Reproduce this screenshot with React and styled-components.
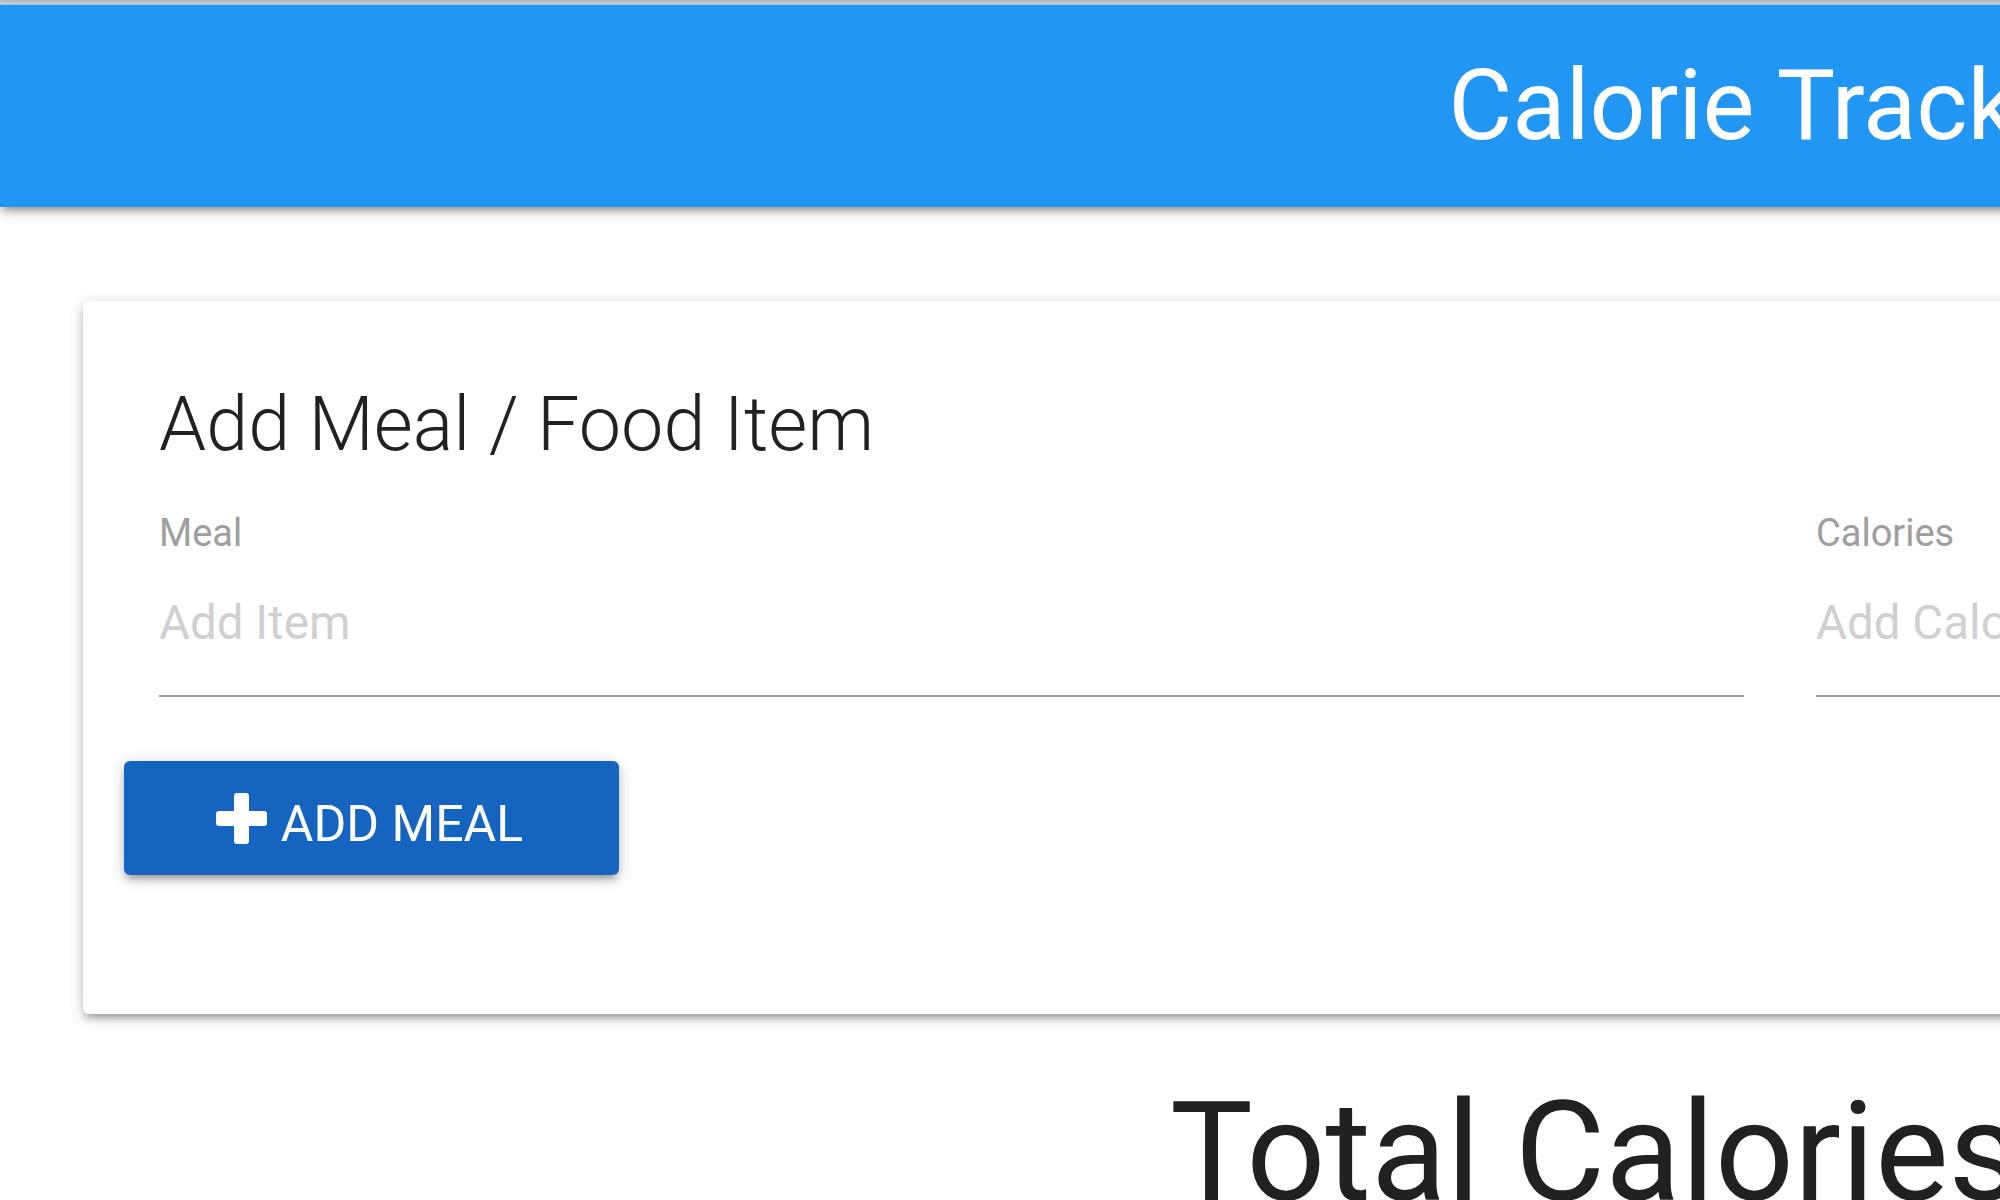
import React from "react";
import styled, { createGlobalStyle } from "styled-components";

const GlobalStyle = createGlobalStyle`
  html, body {
    margin: 0;
    padding: 0;
    background: #ffffff;
    overflow: hidden;
  }
  body {
    font-family: Roboto, "Liberation Sans", sans-serif;
    color: rgba(0, 0, 0, 0.87);
  }
  * { box-sizing: border-box; }
`;

const Page = styled.div`
  width: 3550px;
  display: flex;
  flex-direction: column;
  & > * { flex-shrink: 0; }
`;

const TopEdge = styled.div`
  height: 5px;
  background: linear-gradient(to bottom, #b9b9b9 0%, #d4d4d4 60%, #9fd0fb 100%);
`;

const NavBar = styled.nav`
  height: 202px;
  background: #2196f3;
  display: flex;
  align-items: center;
  justify-content: center;
  box-shadow: 0 6px 6px 0 rgba(0, 0, 0, 0.14), 0 9px 3px -6px rgba(0, 0, 0, 0.12),
    0 3px 15px 0 rgba(0, 0, 0, 0.2);
  position: relative;
  z-index: 1;
`;

const Brand = styled.a`
  color: #ffffff;
  font-family: Roboto, "Liberation Sans", sans-serif;
  font-size: 98px;
  font-weight: 400;
  line-height: 198px;
  text-decoration: none;
  white-space: nowrap;
`;

const Main = styled.main`
  padding: 94px 83px 0;
  display: flex;
  flex-direction: column;
  & > * { flex-shrink: 0; }
`;

const Card = styled.section`
  background: #ffffff;
  border-radius: 6px;
  height: 713px;
  box-shadow: 0 6px 6px 0 rgba(0, 0, 0, 0.14), 0 9px 3px -6px rgba(0, 0, 0, 0.12),
    0 3px 15px 0 rgba(0, 0, 0, 0.2);
  display: flex;
  flex-direction: column;
`;

const CardContent = styled.div`
  padding: 76px 76px 0;
  display: flex;
  flex-direction: column;
`;

const CardTitle = styled.h2`
  margin: 0 0 40px;
  font-family: Roboto, "Liberation Sans", sans-serif;
  font-size: 75.5px;
  font-weight: 300;
  line-height: 94px;
  color: rgba(0, 0, 0, 0.87);
`;

const FieldRow = styled.div`
  display: grid;
  grid-template-columns: 1585px 1585px;
  column-gap: 72px;
`;

const Field = styled.div`
  display: flex;
  flex-direction: column;
`;

const Label = styled.label`
  font-family: Roboto, "Liberation Sans", sans-serif;
  font-size: 38px;
  line-height: 44px;
  color: #9e9e9e;
`;

const TextInput = styled.input`
  height: 142px;
  padding: 0 0 5px;
  margin: 0;
  border: none;
  border-bottom: 2px solid #9e9e9e;
  outline: none;
  background: transparent;
  font-family: Roboto, "Liberation Sans", sans-serif;
  font-size: 47.5px;
  color: rgba(0, 0, 0, 0.87);
  &::placeholder {
    color: #d0d0d0;
  }
`;

const Actions = styled.div`
  padding: 64px 0 0 41px;
  display: flex;
`;

const Button = styled.button`
  width: 495px;
  height: 114px;
  border: none;
  border-radius: 6px;
  background: #1565c0;
  color: #ffffff;
  display: flex;
  align-items: center;
  justify-content: center;
  gap: 14px;
  padding: 0 4px 0 0;
  font-family: Roboto, "Liberation Sans", sans-serif;
  font-size: 50px;
  font-weight: 400;
  text-transform: uppercase;
  box-shadow: 0 6px 6px 0 rgba(0, 0, 0, 0.14), 0 9px 3px -6px rgba(0, 0, 0, 0.12),
    0 3px 15px 0 rgba(0, 0, 0, 0.2);
  cursor: pointer;
`;

const ButtonText = styled.span`
  line-height: 60px;
  padding-top: 12px;
`;

const PlusIcon = () => (
  <svg width="51" height="51" viewBox="0 0 51 51" aria-hidden="true">
    <rect x="18" y="0" width="15" height="51" rx="3" fill="#ffffff" />
    <rect x="0" y="18" width="51" height="15" rx="3" fill="#ffffff" />
  </svg>
);

const TotalHeading = styled.h3`
  margin: 64px 0 0 1087px;
  font-family: Roboto, "Liberation Sans", sans-serif;
  font-size: 139px;
  font-weight: 400;
  line-height: 150px;
  color: #212121;
  white-space: nowrap;
`;

export default function App() {
  return (
    <>
      <GlobalStyle />
      <Page>
        <TopEdge />
        <NavBar>
          <Brand href="#">Calorie Tracker</Brand>
        </NavBar>
        <Main>
          <Card>
            <CardContent>
              <CardTitle>Add Meal / Food Item</CardTitle>
              <FieldRow>
                <Field>
                  <Label htmlFor="item-name">Meal</Label>
                  <TextInput id="item-name" type="text" placeholder="Add Item" />
                </Field>
                <Field>
                  <Label htmlFor="item-calories">Calories</Label>
                  <TextInput id="item-calories" type="number" placeholder="Add Calories" />
                </Field>
              </FieldRow>
            </CardContent>
            <Actions>
              <Button type="button">
                <PlusIcon />
                <ButtonText>Add Meal</ButtonText>
              </Button>
            </Actions>
          </Card>
          <TotalHeading>Total Calories: 0</TotalHeading>
        </Main>
      </Page>
    </>
  );
}
